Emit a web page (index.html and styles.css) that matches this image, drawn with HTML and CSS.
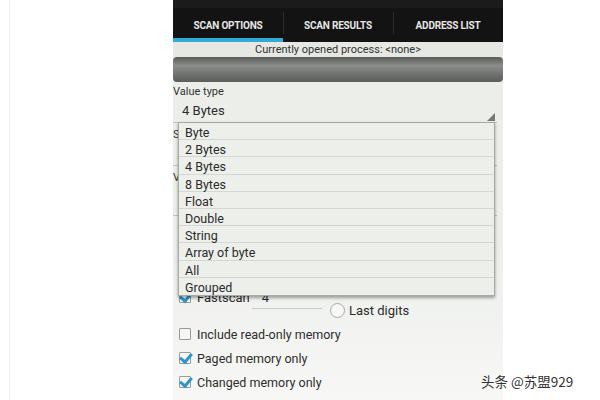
FILE: index.html
```html
<!DOCTYPE html>
<html lang="en">
<head>
    <meta charset="UTF-8">
    <meta name="viewport" content="width=device-width, initial-scale=1.0">
    <title>Scan Options</title>
    <link rel="stylesheet" href="styles.css">
</head>
<body>
    <div class="gutter"></div>

    <div class="phone">
        <div class="tabbar">
            <div class="tab active">SCAN OPTIONS</div>
            <div class="tab">SCAN RESULTS</div>
            <div class="tab">ADDRESS LIST</div>
        </div>
        <div class="process">Currently opened process: &lt;none&gt;</div>
        <div class="select-btn"></div>

        <div class="content">
            <div class="label">Value type</div>
            <div class="spinner">4 Bytes</div>
            <div class="label short">S</div>
            <div class="spinner tall"></div>
            <div class="label short">V</div>
            <div class="spinner field"></div>
            <div class="blank"></div>

            <!-- dropdown opened over the form -->
            <ul class="dropdown">
                <li>Byte</li>
                <li>2 Bytes</li>
                <li>4 Bytes</li>
                <li>8 Bytes</li>
                <li>Float</li>
                <li>Double</li>
                <li>String</li>
                <li>Array of byte</li>
                <li>All</li>
                <li>Grouped</li>
            </ul>

            <div class="fastscan">
                <span class="box checked"></span>
                <span>Fastscan</span>
                <span class="digit">4</span>
            </div>
            <div class="lastdigits">
                <span class="line"></span>
                <span class="radio"></span>
                <span>Last digits</span>
            </div>
            <div class="check"><span class="box"></span>Include read-only memory</div>
            <div class="check"><span class="box checked"></span>Paged memory only</div>
            <div class="check"><span class="box checked"></span>Changed memory only</div>
        </div>
    </div>

    <div class="aside"></div>

    <div class="mark">头条 @苏盟929</div>
</body>
</html>
```

FILE: styles.css
```css
* {
    box-sizing: border-box;
}
body {
    margin: 0;
    height: 400px;
    display: flex;
    background: #fff;
    font-family: Roboto, "Noto Sans", sans-serif;
    color: #2b2b2b;
    overflow: hidden;
    position: relative;
}
.gutter {
    margin-left: 9px;
    border-left: 1px solid #efefef;
    flex: none;
    width: 164px;
}
.phone {
    width: 330px;
    flex: none;
    display: flex;
    flex-direction: column;
    background: linear-gradient(#eceeea 60%, #f7f8f6);
}
.tabbar {
    height: 42px;
    background: #131313;
    border-top: 8px solid #1b1b1b;
    display: flex;
}
.tab {
    flex: 1;
    color: #e6e6e6;
    font-size: 10px;
    font-weight: bold;
    letter-spacing: -0.2px;
    text-align: center;
    padding-top: 12px;
    border-bottom: 4px solid #131313;
    position: relative;
}
.tab + .tab::before {
    content: "";
    position: absolute;
    left: 0;
    top: 4px;
    bottom: 4px;
    border-left: 1px solid #2c2c2c;
}
.tab.active {
    border-bottom-color: #33a9d6;
}
.process {
    height: 15px;
    background: #e6e8e4;
    font-size: 11px;
    text-align: center;
    line-height: 15px;
    color: #333;
}
.select-btn {
    height: 25px;
    border-radius: 4px;
    background: linear-gradient(#585b58, #8a8d89 35%, #6e716d 70%, #5b5e5a);
}
.content {
    position: relative;
    padding-top: 2px;
}
.label {
    font-size: 11px;
    height: 16px;
    line-height: 16px;
    color: #333;
}
.label.short {
    height: 20px;
    line-height: 24px;
}
.spinner {
    height: 23px;
    margin: 0 6px 0 0;
    padding: 3px 9px;
    font-size: 13px;
    border-bottom: 1px solid #c4c6c2;
    position: relative;
}
.spinner::after {
    content: "";
    position: absolute;
    right: 2px;
    bottom: 1px;
    border-left: 8px solid transparent;
    border-bottom: 8px solid #777;
}
.spinner.field {
    height: 30px;
}
.spinner.field::after {
    display: none;
}
.blank {
    height: 70px;
}
.dropdown {
    position: absolute;
    left: 5px;
    top: 40px;
    width: 317px;
    margin: 0;
    padding: 0;
    list-style: none;
    background: #edefeb;
    border: 1px solid #a7a9a5;
    box-shadow: 0 2px 3px rgba(0, 0, 0, 0.35);
    z-index: 2;
}
.dropdown li {
    height: 17.2px;
    line-height: 19px;
    padding-left: 6px;
    font-size: 12.5px;
    border-bottom: 1px solid #d4d7d3;
}
.dropdown li:last-child {
    border-bottom: none;
}
.fastscan {
    display: flex;
    align-items: center;
    gap: 6px;
    height: 14px;
    margin-top: 4px;
    padding-left: 6px;
    font-size: 13px;
}
.fastscan .digit {
    margin-left: 6px;
}
.lastdigits {
    display: flex;
    align-items: center;
    height: 20px;
    margin-top: -4px;
    padding-left: 79px;
    font-size: 13px;
}
.lastdigits .line {
    width: 70px;
    border-bottom: 1px solid #c9cbc7;
    margin-top: -4px;
}
.radio {
    width: 15px;
    height: 15px;
    border: 1px solid #a9aba7;
    border-radius: 50%;
    background: #f7f8f6;
    margin: 0 4px 0 8px;
}
.check {
    display: flex;
    align-items: center;
    gap: 6px;
    height: 24px;
    padding-left: 6px;
    font-size: 12.5px;
    color: #2e2e2e;
}
.fastscan + .lastdigits + .check {
    margin-top: 2px;
}
.box {
    width: 12px;
    height: 12px;
    border: 1px solid #9a9c98;
    border-radius: 1px;
    background: #f6f7f5;
    position: relative;
    flex: none;
}
.box.checked::after {
    content: "";
    position: absolute;
    left: 2px;
    top: -2px;
    width: 5px;
    height: 9px;
    border-right: 3px solid #2e96c9;
    border-bottom: 3px solid #2e96c9;
    transform: rotate(40deg);
}
.aside {
    flex: 1;
}
.mark {
    position: absolute;
    left: 481px;
    top: 371px;
    white-space: nowrap;
    font-family: "Noto Sans CJK SC", sans-serif;
    font-size: 13.5px;
    color: #333;
}
```
